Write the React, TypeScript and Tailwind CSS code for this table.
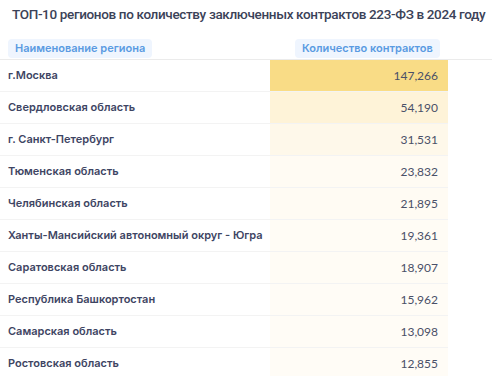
import React from "react";

type Row = { name: string; count: number; bg: string };

const rows: Row[] = [
  { name: "г.Москва", count: 147266, bg: "bg-[#f9dc86]" },
  { name: "Свердловская область", count: 54190, bg: "bg-[#fef3d8]" },
  { name: "г. Санкт-Петербург", count: 31531, bg: "bg-[#fef8ea]" },
  { name: "Тюменская область", count: 23832, bg: "bg-[#fffbf3]" },
  { name: "Челябинская область", count: 21895, bg: "bg-[#fffbf3]" },
  { name: "Ханты-Мансийский автономный округ - Югра", count: 19361, bg: "bg-[#fffcf5]" },
  { name: "Саратовская область", count: 18907, bg: "bg-[#fffcf5]" },
  { name: "Республика Башкортостан", count: 15962, bg: "bg-[#fffcf6]" },
  { name: "Самарская область", count: 13098, bg: "bg-[#fffcf6]" },
  { name: "Ростовская область", count: 12855, bg: "bg-[#fffcf6]" },
];

const fmt = (n: number) => n.toLocaleString("en-US");

export default function App() {
  return (
    <div className="w-[492px] h-[376px] overflow-hidden bg-white font-['Inter',sans-serif]">
      <h1 className="pt-[5px] pl-[12px] whitespace-nowrap text-[13.5px] leading-[18px] font-medium tracking-[-0.35px] text-[#3b4258] font-['Roboto',sans-serif]">
        ТОП-10 регионов по количеству заключенных контрактов 223-ФЗ в 2024 году
      </h1>
      <div className="flex h-[37px] pt-[11px] border-b border-[#ebebeb]">
        <div className="w-[270px] pl-[8px]">
          <span className="inline-block rounded-[4px] bg-[#eff5fe] px-[7px] py-[3px] text-[11px] leading-[13px] font-semibold text-[#5a9be2]">
            Наименование региона
          </span>
        </div>
        <div className="w-[178px] pl-[25px]">
          <span className="inline-block rounded-[4px] bg-[#eff5fe] px-[7px] py-[3px] text-[11px] leading-[13px] font-semibold text-[#5a9be2]">
            Количество контрактов
          </span>
        </div>
      </div>
      {rows.map((r, i) => (
        <div key={i} className="flex w-[448px] h-[32px] border-b border-[#f3f3f3]">
          <div className="w-[270px] pl-[8px] flex items-center text-[11px] font-semibold text-[#3e4563]">
            {r.name}
          </div>
          <div
            className={`w-[178px] pr-[10px] flex items-center justify-end text-[12px] text-[#4a5068] font-['Lato',sans-serif] ${r.bg}`}
          >
            {fmt(r.count)}
          </div>
        </div>
      ))}
    </div>
  );
}
